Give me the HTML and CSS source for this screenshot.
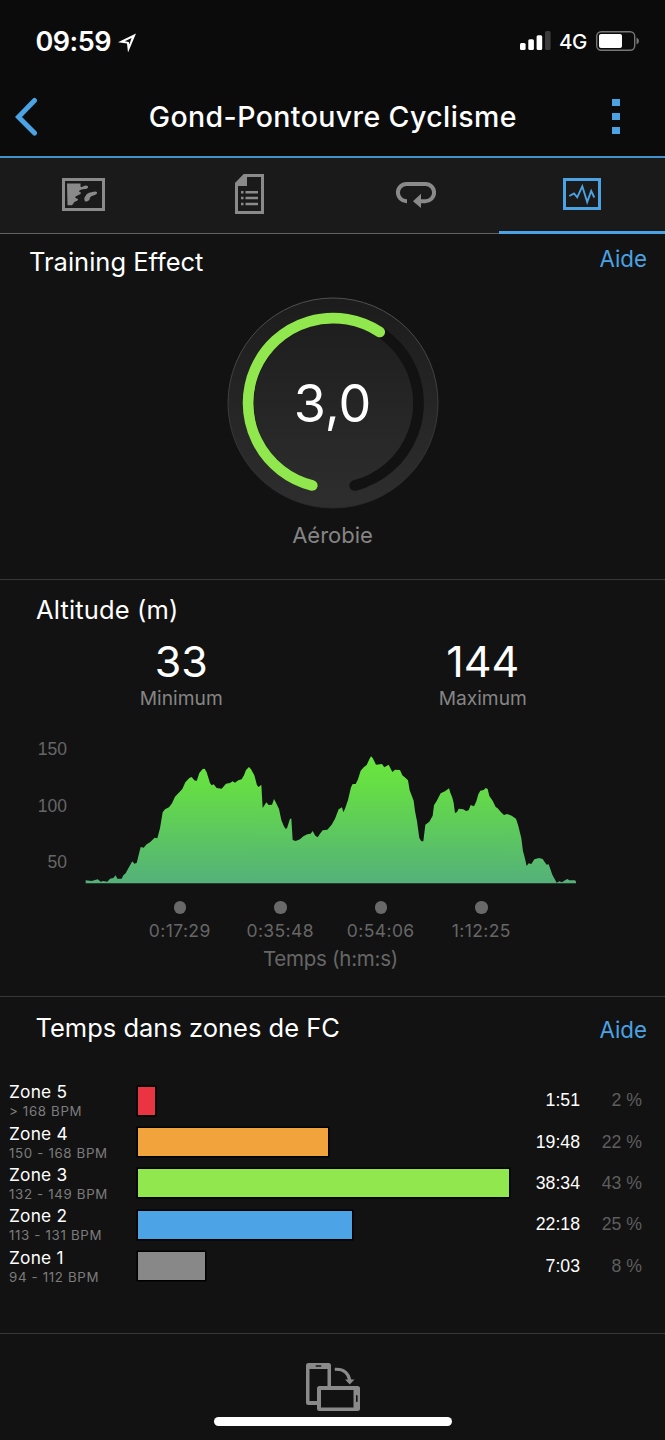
FILE: index.html
```html
<!DOCTYPE html>
<html lang="fr">
<head>
    <meta charset="UTF-8">
    <meta name="viewport" content="width=device-width, initial-scale=1.0">
    <title>Gond-Pontouvre Cyclisme</title>
    <link rel="stylesheet" href="styles.css">
</head>
<body>

<div class="status-bar">
    <span class="clock">09:59</span>
    <svg class="location" width="19" height="20" viewBox="0 0 19 20">
        <path fill="#fff" fill-rule="evenodd" d="M18 .5L10 19.5L9 10.5L0 9.2ZM13.6 5L6.8 8.3L10.8 8.9L11.3 11.6Z"/>
    </svg>
    <svg class="signal" width="31" height="20" viewBox="0 0 31 20">
        <rect x="0" y="12" width="5.6" height="7" rx="1.5" fill="#fff"/>
        <rect x="8.3" y="8.3" width="5.6" height="10.7" rx="1.5" fill="#fff"/>
        <rect x="16.6" y="4.3" width="5.6" height="14.7" rx="1.5" fill="#fff"/>
        <rect x="25" y="0" width="5.6" height="19" rx="1.5" fill="#3c3c3c"/>
    </svg>
    <span class="network">4G</span>
    <svg class="battery" width="44" height="20" viewBox="0 0 44 20">
        <rect x=".7" y=".7" width="38" height="18.6" rx="4.5" fill="none" stroke="#777" stroke-width="1.4"/>
        <rect x="3" y="3" width="23" height="14" rx="2" fill="#fff"/>
        <path d="M40.5 6.5Q43 7.5 43 10T40.5 13.5Z" fill="#777"/>
    </svg>
</div>

<header class="header">
    <svg class="back" width="24" height="40" viewBox="0 0 24 40">
        <path d="M19.5 3.5L3.5 20L19.5 36" fill="none" stroke="#4ba3e3" stroke-width="5" stroke-linecap="round"/>
    </svg>
    <h1>Gond-Pontouvre Cyclisme</h1>
    <div class="menu"><i></i><i></i><i></i></div>
</header>

<nav class="tabs">
    <div class="tab">
        <svg width="43" height="33" viewBox="0 0 43 33">
            <rect x="1.5" y="1.5" width="40" height="30" fill="none" stroke="#8a8a8a" stroke-width="3"/>
            <path fill="#8a8a8a" d="M5 5.5H18.5V8.5Q19.5 9.7 21.5 8.2Q24 7 26 8.3Q26.5 10 24.8 10.7L19.5 11.6Q16.8 12.3 17 13.8Q19.6 14 18.5 16L13.5 18.5Q12.6 20 14.5 20.5Q17 21 15.5 22.5L12 24.2Q11 27.4 8.5 27.3H5.5Z"/>
            <path fill="#8a8a8a" d="M23.5 18Q25 14.5 30.5 14Q34 12.8 35 14.2Q35.6 16.3 31.5 17.4Q27.5 18.2 27.6 21.5Q25.5 24.4 23 23.2Q21.4 20.7 23.5 18Z"/>
        </svg>
    </div>
    <div class="tab">
        <svg width="29" height="41" viewBox="0 0 29 41">
            <path d="M9.5 1.5H27.5V38.5H1.5V9.5Z" fill="none" stroke="#8a8a8a" stroke-width="3"/>
            <path fill="#8a8a8a" d="M0 9.5L9 0H12V12H0ZM6 17h2.5v2.5H6zM10.5 17H23v2.5H10.5zM6 22.8h2.5v2.5H6zM10.5 22.8H23v2.5H10.5zM6 28.7h2.5v2.5H6zM10.5 28.7H23v2.5H10.5z"/>
        </svg>
    </div>
    <div class="tab">
        <svg width="40" height="28" viewBox="0 -1.5 40 28">
            <path d="M11 19.7H10.5A8.6 8.6 0 0 1 10.5 2.5H29.5A8.6 8.6 0 0 1 29.5 19.7H23" fill="none" stroke="#8a8a8a" stroke-width="4"/>
            <path d="M17 19.7L25 12.3V26.5Z" fill="#8a8a8a"/>
        </svg>
    </div>
    <div class="tab active">
        <svg width="38" height="32" viewBox="0 0 38 32">
            <rect x="1.5" y="1.5" width="35" height="29" fill="none" stroke="#4ba3e3" stroke-width="3"/>
            <path d="M6.3 18L11 15.5L14.2 19.3L19.3 8.3L24.2 24L28.2 13L31.3 19.5" fill="none" stroke="#4ba3e3" stroke-width="1.9"/>
        </svg>
    </div>
</nav>

<section class="effect">
    <div class="section-head">
        <h2>Training Effect</h2>
        <a class="help">Aide</a>
    </div>
    <div class="gauge">
        <svg width="212" height="212" viewBox="-106 -106 212 212">
            <defs>
                <linearGradient id="dial" x1="0" y1="0" x2="0" y2="1">
                    <stop offset="0" stop-color="#1c1c1c"/>
                    <stop offset="1" stop-color="#2e2e2e"/>
                </linearGradient>
                <linearGradient id="rim" x1="0" y1="0" x2="0" y2="1">
                    <stop offset="0" stop-color="#505050"/>
                    <stop offset="1" stop-color="#292929"/>
                </linearGradient>
            </defs>
            <circle r="105" fill="url(#dial)" stroke="url(#rim)"/>
            <path class="track" d="M-20.7 82.5A85 85 0 1 1 21.7 82.5"/>
            <path class="value" d="M-20.7 82.5A85 85 0 1 1 46.7 -71"/>
        </svg>
        <span class="gauge-value">3,0</span>
    </div>
    <div class="gauge-label">Aérobie</div>
</section>

<section class="altitude">
    <h2>Altitude (m)</h2>
    <div class="stats">
        <div><strong>33</strong><span>Minimum</span></div>
        <div><strong>144</strong><span>Maximum</span></div>
    </div>
    <div class="chart">
        <div class="y-axis"><span>150</span><span>100</span><span>50</span></div>
        <svg width="492" height="130" viewBox="255 42 1476 390">
            <defs>
                <linearGradient id="hill" gradientUnits="userSpaceOnUse" x1="0" y1="48" x2="0" y2="430">
                    <stop offset="0" stop-color="#69e63e"/>
                    <stop offset=".25" stop-color="#65dc46"/>
                    <stop offset="1" stop-color="#54b17a"/>
                </linearGradient>
            </defs>
            <path fill="url(#hill)" d="M257 430V421L275 423L293 418L302 425L310 423L322 425L330 416L340 414L347 406L352 416L365 416L370 406L377 400L385 385L397 364L403 371L410 369L422 321L431 323L440 313L450 307L464 293L472 295L480 265L488 217L495 208L507 202L516 190L525 170L535 160L547 147L556 127L568 114L575 111L583 121L590 123L598 99L608 87L614 86L620 97L630 129L635 136L641 133L650 144L665 146L678 131L690 129L698 124L705 128L715 121L725 118L732 106L738 90L747 81L753 88L763 106L771 136L776 141L784 134L788 204L799 187L806 195L816 194L822 177L828 188L837 207L844 240L850 255L856 266L861 265L870 236L874 236L878 300L887 303L900 298L910 289L922 283L932 281L938 273L946 287L953 292L960 281L968 271L982 269L995 254L1005 236L1016 208L1026 202L1030 217L1035 206L1044 180L1053 142L1058 132L1067 132L1074 118L1082 92L1092 81L1100 75L1108 58L1113 49L1118 54L1128 74L1146 72L1153 82L1166 74L1177 96L1185 89L1200 90L1207 106L1216 113L1224 121L1229 151L1241 182L1245 213L1251 244L1258 294L1264 304L1270 304L1276 254L1288 245L1298 227L1302 196L1310 183L1322 160L1335 154L1347 145L1351 158L1357 173L1361 189L1365 219L1371 216L1376 206L1390 208L1398 213L1406 211L1412 195L1422 199L1429 184L1435 163L1441 152L1451 150L1457 144L1463 147L1468 168L1478 182L1487 201L1493 205L1503 217L1512 225L1521 222L1535 227L1548 236L1555 258L1564 295L1569 334L1574 352L1580 378L1586 370L1594 372L1603 358L1617 354L1628 357L1634 366L1640 374L1646 373L1657 404L1670 428L1678 424L1686 427L1695 421L1702 417L1708 421L1725 421L1728 425V430Z"/>
        </svg>
    </div>
    <div class="x-axis">
        <span>0:17:29</span><span>0:35:48</span><span>0:54:06</span><span>1:12:25</span>
    </div>
    <div class="x-title">Temps (h:m:s)</div>
</section>

<section class="zones">
    <div class="section-head">
        <h2>Temps dans zones de FC</h2>
        <a class="help">Aide</a>
    </div>
    <div class="zone-list">
        <div class="zone">
            <div class="zone-name">Zone 5<small>&gt; 168 BPM</small></div>
            <div class="track-cell"><div class="bar red" style="width: 17px"></div></div>
            <span class="time">1:51</span><span class="percent">2 %</span>
        </div>
        <div class="zone">
            <div class="zone-name">Zone 4<small>150 - 168 BPM</small></div>
            <div class="track-cell"><div class="bar orange" style="width: 190px"></div></div>
            <span class="time">19:48</span><span class="percent">22 %</span>
        </div>
        <div class="zone">
            <div class="zone-name">Zone 3<small>132 - 149 BPM</small></div>
            <div class="track-cell"><div class="bar green" style="width: 371px"></div></div>
            <span class="time">38:34</span><span class="percent">43 %</span>
        </div>
        <div class="zone">
            <div class="zone-name">Zone 2<small>113 - 131 BPM</small></div>
            <div class="track-cell"><div class="bar blue" style="width: 214px"></div></div>
            <span class="time">22:18</span><span class="percent">25 %</span>
        </div>
        <div class="zone">
            <div class="zone-name">Zone 1<small>94 - 112 BPM</small></div>
            <div class="track-cell"><div class="bar gray" style="width: 67px"></div></div>
            <span class="time">7:03</span><span class="percent">8 %</span>
        </div>
    </div>
</section>

<footer class="footer">
    <svg width="54" height="48" viewBox="0 0 54 48">
        <path fill="#8a8a8a" fill-rule="evenodd" d="M2.5 0H22.5Q25 0 25 2.5V24H21.5V6H3.5V38H12V42H2.5Q0 42 0 39.5V2.5Q0 0 2.5 0ZM10 2.2Q9 3 10 3.8H15Q16 3 15 2.2Z"/>
        <path fill="#8a8a8a" fill-rule="evenodd" d="M13.5 23H51.5Q54 23 54 25.5V45.5Q54 48 51.5 48H13.5Q11 48 11 45.5V25.5Q11 23 13.5 23ZM15 27V44.5H47.5V27ZM50 32.5V38.5Q50.8 39.5 51.6 38.5V32.5Q50.8 31.5 50 32.5Z"/>
        <path d="M28.8 6.3Q41.5 5.5 43.8 17.5" fill="none" stroke="#8a8a8a" stroke-width="3.2"/>
        <path d="M39 16.5H48.5L43.8 21.5Z" fill="#8a8a8a"/>
    </svg>
    <div class="home-bar"></div>
</footer>

</body>
</html>
```
FILE: styles.css
```css
* {
    box-sizing: border-box;
}
body {
    margin: 0;
    width: 665px;
    height: 1440px;
    background: #121212;
    color: #fff;
    font-family: Inter, "Liberation Sans", sans-serif;
    overflow: hidden;
    white-space: nowrap;
}
h1, h2 {
    margin: 0;
    font-weight: 400;
}
svg {
    display: block;
    flex: none;
}
.status-bar {
    display: flex;
    align-items: center;
    height: 82px;
    padding: 0 25px 0 35.5px;
    background: #0b0b0b;
}
.clock {
    width: 82px;
    font-size: 27px;
    font-weight: 600;
    letter-spacing: -0.5px;
}
.location {
    margin-top: 3px;
}
.signal {
    margin-left: auto;
}
.network {
    width: 36px;
    padding-left: 8px;
    font-size: 20.5px;
    font-weight: 500;
    letter-spacing: -0.4px;
    margin-top: 1px;
}
.battery {
    margin-left: 9px;
}
.header {
    display: flex;
    align-items: center;
    height: 76px;
    padding: 0 45.5px 5px 15px;
    background: #0b0b0b;
    border-bottom: 2px solid #4291cb;
}
.header h1 {
    flex: 1;
    margin-left: 15px;
    text-align: center;
    font-size: 28.5px;
    font-weight: 550;
    letter-spacing: 0.4px;
}
.menu {
    display: grid;
    gap: 7px;
}
.menu i {
    width: 8px;
    height: 7px;
    background: #4ba3e3;
}
.tabs {
    display: grid;
    grid-template-columns: repeat(4, 1fr);
    height: 76px;
    background: #1a1a1a;
}
.tab {
    display: flex;
    justify-content: center;
    align-items: center;
    padding-bottom: 3px;
    border-bottom: 1px solid #626262;
}
.tab.active {
    padding-bottom: 1px;
    border-bottom: 3px solid #4ba3e3;
}
section {
    border-bottom: 1px solid #383838;
}
h2 {
    font-size: 25.5px;
    line-height: 32px;
}
.section-head {
    display: flex;
    justify-content: space-between;
}
.help {
    font-size: 22.3px;
    line-height: 32px;
    color: #4ba3e3;
}
.effect {
    height: 346px;
    padding: 12px 18px 0 29px;
}
.effect .help {
    margin-top: -3px;
}
.gauge {
    display: grid;
    place-items: center;
    width: 212px;
    margin: 19px auto 0 197.5px;
}
.gauge svg, .gauge-value {
    grid-area: 1 / 1;
}
.gauge-value {
    font-size: 52px;
    font-weight: 400;
}
.track, .value {
    fill: none;
    stroke-width: 10.7;
    stroke-linecap: round;
}
.track {
    stroke: #121212;
}
.value {
    stroke: #91e84e;
}
.gauge-label {
    margin-top: 11px;
    margin-right: 11px;
    text-align: center;
    font-size: 22px;
    line-height: 30px;
    color: #858585;
}
.altitude {
    height: 417px;
    padding-top: 14px;
}
.altitude h2 {
    padding-left: 36px;
    letter-spacing: 0.15px;
}
.stats {
    display: grid;
    grid-template-columns: 1fr 1fr;
    width: 603px;
    margin-left: 30.5px;
    padding-top: 9px;
    text-align: center;
}
.stats strong, .stats span {
    display: block;
}
.stats strong {
    font-size: 43px;
    font-weight: 400;
    line-height: 52px;
}
.stats span {
    font-size: 19.2px;
    line-height: 22px;
    color: #858585;
}
.chart {
    display: flex;
    height: 145px;
    margin-top: 31px;
}
.chart svg {
    margin: 14px 0 0 18px;
}
.y-axis {
    width: 67px;
    text-align: right;
    font-family: "Liberation Sans", sans-serif;
    font-size: 17.5px;
    color: #666;
}
.y-axis span {
    display: block;
    height: 56.7px;
    line-height: 18px;
}
.x-axis {
    display: grid;
    grid-template-columns: repeat(4, 100.5px);
    margin: 16px 0 0 129.5px;
    text-align: center;
    font-size: 17.5px;
    line-height: 22px;
    color: #666;
    letter-spacing: 0.4px;
}
.x-axis span::before {
    content: "";
    display: block;
    width: 12.5px;
    height: 12.5px;
    margin: 0 auto 6px;
    border-radius: 50%;
    background: #696969;
}
.x-title {
    margin-top: 2.5px;
    margin-right: 4px;
    text-align: center;
    font-size: 20.5px;
    letter-spacing: -0.25px;
    line-height: 30px;
    color: #666;
}
.zones {
    height: 337px;
    padding-top: 14.5px;
}
.zones .section-head {
    padding: 0 18px 0 35.5px;
}
.zones .help {
    margin-top: 2.5px;
}
.zone-list {
    padding-top: 35.3px;
}
.zone {
    display: grid;
    grid-template-columns: 129px 387px 55px 62px;
    height: 41.35px;
    padding-left: 9px;
}
.zone-name {
    font-size: 17.3px;
    letter-spacing: 0.2px;
    line-height: 20px;
    padding-top: 1px;
}
.zone-name small {
    display: block;
    font-size: 13.3px;
    letter-spacing: 0.65px;
    line-height: 18px;
    color: #7c7c7c;
}
.bar {
    height: 28px;
    margin-top: 5.5px;
    box-shadow: 0 0 0 1.5px #000;
}
.red {
    background: #eb3441;
}
.orange {
    background: #f2a33c;
}
.green {
    background: #91e84e;
}
.blue {
    background: #4ca4e6;
}
.gray {
    background: #888;
}
.time, .percent {
    text-align: right;
    font-family: "Liberation Sans", sans-serif;
    font-size: 17.7px;
    line-height: 38px;
}
.percent {
    color: #5e5e5e;
}
.footer {
    display: flex;
    flex-direction: column;
    align-items: center;
    padding-top: 29px;
}
.home-bar {
    width: 238px;
    height: 9px;
    margin-top: 6px;
    border-radius: 5px;
    background: #fff;
}
```
